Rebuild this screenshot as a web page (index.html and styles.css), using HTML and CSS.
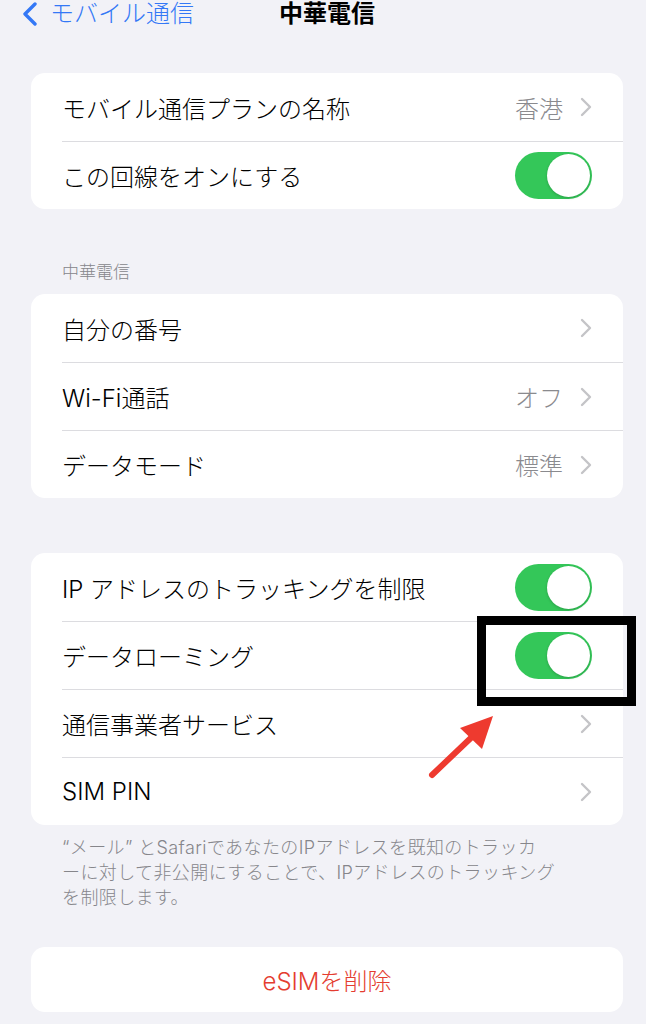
FILE: index.html
```html
<!DOCTYPE html>
<html lang="ja">
<head>
  <meta charset="UTF-8">
  <meta name="viewport" content="width=device-width, initial-scale=1.0">
  <title>中華電信</title>
  <link rel="stylesheet" href="styles.css">
</head>
<body>

  <div class="page">
    <div class="nav">
      <a class="back" href="#">
        <svg width="16" height="24" viewBox="0 0 16 24"><path d="M13 2 L3 12 L13 22" fill="none" stroke="#3478f6" stroke-width="3.4" stroke-linecap="round" stroke-linejoin="round"/></svg>
        <span>モバイル通信</span>
      </a>
      <div class="title">中華電信</div>
      <div></div>
    </div>

    <div class="card first">
      <div class="row">
        <span class="label">モバイル通信プランの名称</span>
        <span class="value">香港</span>
        <svg class="chev" width="12" height="20" viewBox="0 0 12 20"><path d="M2 2 L10 10 L2 18" fill="none" stroke="#c4c4c7" stroke-width="2.4" stroke-linecap="round" stroke-linejoin="round"/></svg>
      </div>
      <div class="row">
        <span class="label">この回線をオンにする</span>
        <span class="toggle"><span class="knob"></span></span>
      </div>
    </div>

    <div class="section-title">中華電信</div>

    <div class="card">
      <div class="row">
        <span class="label">自分の番号</span>
        <svg class="chev" width="12" height="20" viewBox="0 0 12 20"><path d="M2 2 L10 10 L2 18" fill="none" stroke="#c4c4c7" stroke-width="2.4" stroke-linecap="round" stroke-linejoin="round"/></svg>
      </div>
      <div class="row">
        <span class="label">Wi-Fi通話</span>
        <span class="value">オフ</span>
        <svg class="chev" width="12" height="20" viewBox="0 0 12 20"><path d="M2 2 L10 10 L2 18" fill="none" stroke="#c4c4c7" stroke-width="2.4" stroke-linecap="round" stroke-linejoin="round"/></svg>
      </div>
      <div class="row">
        <span class="label">データモード</span>
        <span class="value">標準</span>
        <svg class="chev" width="12" height="20" viewBox="0 0 12 20"><path d="M2 2 L10 10 L2 18" fill="none" stroke="#c4c4c7" stroke-width="2.4" stroke-linecap="round" stroke-linejoin="round"/></svg>
      </div>
    </div>

    <div class="card group">
      <div class="row">
        <span class="label">IP アドレスのトラッキングを制限</span>
        <span class="toggle"><span class="knob"></span></span>
      </div>
      <div class="row">
        <span class="label">データローミング</span>
        <span class="toggle"><span class="knob"></span></span>
      </div>
      <div class="row">
        <span class="label">通信事業者サービス</span>
        <svg class="chev" width="12" height="20" viewBox="0 0 12 20"><path d="M2 2 L10 10 L2 18" fill="none" stroke="#c4c4c7" stroke-width="2.4" stroke-linecap="round" stroke-linejoin="round"/></svg>
      </div>
      <div class="row">
        <span class="label">SIM PIN</span>
        <svg class="chev" width="12" height="20" viewBox="0 0 12 20"><path d="M2 2 L10 10 L2 18" fill="none" stroke="#c4c4c7" stroke-width="2.4" stroke-linecap="round" stroke-linejoin="round"/></svg>
      </div>
    </div>

    <p class="note">“メール” とSafariであなたのIPアドレスを既知のトラッカ<br>ーに対して非公開にすることで、IPアドレスのトラッキング<br>を制限します。</p>

    <div class="card delete">eSIMを削除</div>
  </div>

  <!-- 注釈：枠と矢印 -->
  <div class="mark-box"></div>
  <svg class="mark-arrow" width="84" height="82" viewBox="0 0 84 82">
    <line x1="12" y1="70" x2="54" y2="30" stroke="#ee3a2f" stroke-width="6" stroke-linecap="round"/>
    <polygon points="73,11 40,23 62,44" fill="#ee3a2f"/>
  </svg>

</body>
</html>
```

FILE: styles.css
```css
body {
  margin: 0;
  background-color: #f2f2f7;
  font-family: 'Inter', 'Noto Sans CJK JP', sans-serif;
  font-weight: 300;
  color: #000;
  position: relative;
}
.page {
  width: 592px;
  margin-left: 31px;
  padding-bottom: 12px;
}
.nav {
  display: grid;
  grid-template-columns: 1fr auto 1fr;
  align-items: center;
  height: 25px;
  padding-top: 1px;
  font-size: 24px;
  line-height: 24px;
}
.back {
  display: flex;
  align-items: center;
  gap: 12px;
  margin-left: -9px;
  color: #3478f6;
  text-decoration: none;
}
.back svg {
  flex: none;
}
.title {
  font-weight: 600;
}
.card {
  background: white;
  border-radius: 14px;
  overflow: hidden;
}
.card.first {
  margin-top: 47px;
}
.card.group {
  margin-top: 55px;
}
.section-title {
  margin: 53px 0 12px 31px;
  font-size: 17px;
  line-height: 20px;
  color: #86868b;
}
.row {
  display: flex;
  align-items: center;
  box-sizing: border-box;
  height: 68px;
  margin-left: 31px;
  padding-right: 31px;
  font-size: 24px;
}
.row + .row {
  border-top: 1px solid #dcdce0;
}
.label {
  flex: 1;
}
.value {
  color: #8a8a8e;
  margin-right: 17px;
}
.chev {
  flex: none;
}
.toggle {
  flex: none;
  position: relative;
  width: 77px;
  height: 47px;
  border-radius: 24px;
  background: #34c759;
}
.knob {
  position: absolute;
  top: 2px;
  right: 2px;
  width: 43px;
  height: 43px;
  border-radius: 50%;
  background: white;
  box-shadow: 0 1px 3px rgba(0, 0, 0, 0.2);
}
.note {
  margin: 0;
  padding: 10px 31px 0 31px;
  font-size: 18px;
  letter-spacing: 0.4px;
  line-height: 25px;
  color: #86868b;
}
.card.delete {
  margin-top: 37px;
  height: 65px;
  display: flex;
  align-items: center;
  justify-content: center;
  font-size: 24px;
  color: #e43d30;
}
.mark-box {
  position: absolute;
  left: 477px;
  top: 616px;
  width: 159px;
  height: 90px;
  box-sizing: border-box;
  border: 9px solid #000;
}
.mark-arrow {
  position: absolute;
  left: 420px;
  top: 705px;
}
```
